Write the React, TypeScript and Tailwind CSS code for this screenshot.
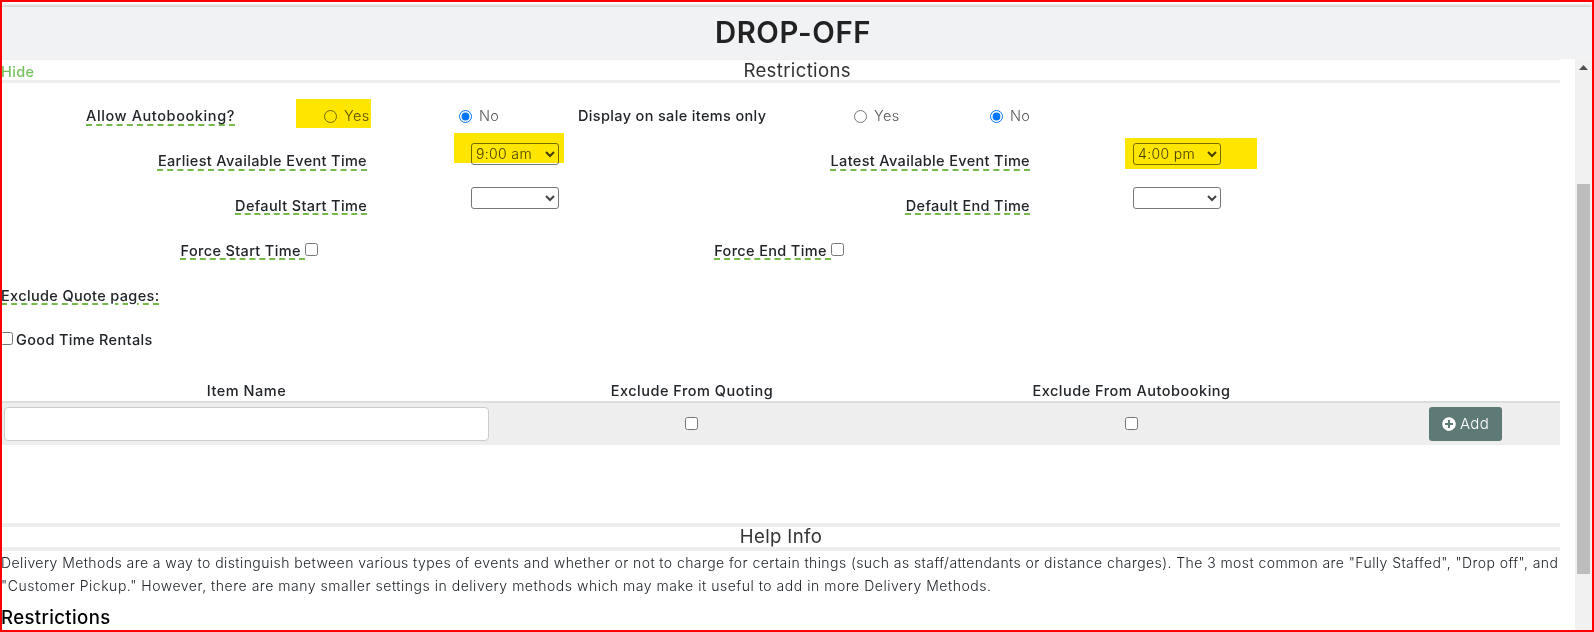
import { FaPlusCircle } from "react-icons/fa";

function Label({ text, className = "" }: { text: string; className?: string }) {
  return (
    <span className={`font-medium whitespace-pre underline decoration-dashed decoration-[#74b94a] decoration-2 underline-offset-[3px] ${className}`}>
      {text}
    </span>
  );
}

function Radio({ name, label, checked, className }: { name: string; label: string; checked?: boolean; className: string }) {
  return (
    <label className={`flex items-center text-[#555] font-light ${className}`}>
      <input type="radio" name={name} defaultChecked={checked} className="w-[13px] h-[13px] m-0 accent-[#0075ff]" />
      <span className="ml-[7px]">{label}</span>
    </label>
  );
}

function TimeSelect({ value, className = "" }: { value?: string; className?: string }) {
  return (
    <select defaultValue={value ?? ""} className={`w-[88px] h-[22px] bg-white border border-[#767676] rounded-[3px] text-[14px] text-[#444] font-light ${className}`}>
      <option value=""></option>
      <option value="9:00 am">9:00 am</option>
      <option value="4:00 pm">4:00 pm</option>
    </select>
  );
}

function SectionHead({ title, hide, lift }: { title: string; hide?: boolean; lift?: boolean }) {
  return (
    <div className={`h-[20px] relative ${lift ? "leading-[18px]" : "leading-[20px]"}`}>
      {hide && <span className="float-left mt-[2px] text-[14.5px] font-medium text-[#74c25a] -ml-[1px]">Hide</span>}
      <div className="text-center text-[18.6px] text-[#333]">{title}</div>
    </div>
  );
}

export default function App() {
  return (
    <div
      className="relative w-[1594px] h-[632px] border-2 border-[#ff0000] bg-white overflow-hidden flex flex-col text-[14.5px] text-[#212529] tracking-[0.35px]"
      style={{ fontFamily: "Inter, 'Noto Sans', sans-serif" }}
    >
      <div className="h-[57px] shrink-0 pt-[5px] bg-white">
        <div className="h-[52px] bg-[#f1f2f4] shadow-[0_-2px_3px_rgba(0,0,0,0.2)] flex items-center justify-center text-[29.3px] font-semibold text-[#222] pr-[8px] tracking-[0.6px]">
          DROP-OFF
        </div>
      </div>

      <div className="flex flex-1 min-h-0">
        <div className="w-[1558px] shrink-0 overflow-hidden">
          <div className="h-[1px] bg-[#eee]" />
          <SectionHead title="Restrictions" hide />
          <div className="h-[3px] bg-[#eee]" />

          <div className="h-[11px]" />
          <div className="h-[44px] flex items-center">
            <div className="w-[233px] text-right"><Label text="Allow Autobooking?" className="tracking-[0.6px]" /></div>
            <Radio name="auto" label="Yes" className="ml-[89px] w-[135px]" />
            <Radio name="auto" label="No" checked className="w-[119px]" />
            <span className="font-medium whitespace-nowrap w-[269px]">Display on sale items only</span>
            <Radio name="sale" label="Yes" className="ml-[7px] w-[136px]" />
            <Radio name="sale" label="No" checked className="" />
          </div>
          <div className="h-[46px] flex items-center">
            <div className="w-[365px] text-right"><Label text="Earliest Available Event Time" /></div>
            <TimeSelect value="9:00 am" className="ml-[104px] -mt-[15px]" />
            <div className="w-[471px] text-right"><Label text="Latest Available Event Time" /></div>
            <TimeSelect value="4:00 pm" className="ml-[103px] -mt-[15px]" />
          </div>
          <div className="h-[43px] flex items-center">
            <div className="w-[365px] text-right"><Label text="Default Start Time" /></div>
            <TimeSelect className="ml-[104px] -mt-[16px]" />
            <div className="w-[471px] text-right"><Label text="Default End Time" /></div>
            <TimeSelect className="ml-[103px] -mt-[16px]" />
          </div>
          <div className="h-[47px] flex items-center">
            <div className="w-[303px] text-right"><Label text={"Force Start Time\u00a0"} /></div>
            <input type="checkbox" className="w-[13px] h-[13px] m-0 -mt-[3px] accent-[#0075ff]" />
            <div className="w-[513px] text-right"><Label text={"Force End Time\u00a0"} /></div>
            <input type="checkbox" className="w-[13px] h-[13px] m-0 -mt-[3px] accent-[#0075ff]" />
          </div>
          <div className="h-[43px] flex items-center -ml-[1px]"><Label text="Exclude Quote pages:" /></div>
          <div className="h-[46px] flex items-center">
            <input type="checkbox" className="w-[13px] h-[13px] -ml-[2px] -mt-[4px] accent-[#0075ff]" />
            <span className="ml-[3px] font-medium">Good Time Rentals</span>
          </div>

          <div className="h-[18px]" />
          <div className="h-[20px] leading-[20px] grid grid-cols-[489px_402px_477px_190px] text-center font-medium tracking-[0.5px]">
            <div>Item Name</div>
            <div>Exclude From Quoting</div>
            <div>Exclude From Autobooking</div>
            <div />
          </div>
          <div className="border-t-2 border-[#ddd] h-[44px] bg-[#eee] grid grid-cols-[489px_402px_477px_190px] items-center">
            <input type="text" className="ml-[2px] w-[485px] h-[34px] -mt-[1px] bg-white border border-[#ccc] rounded-[4px]" />
            <div className="flex justify-center"><input type="checkbox" className="w-[13px] h-[13px] -mt-[1px] -ml-[2px] accent-[#0075ff]" /></div>
            <div className="flex justify-center"><input type="checkbox" className="w-[13px] h-[13px] -mt-[1px] accent-[#0075ff]" /></div>
            <div>
              <button className="ml-[59px] w-[73px] h-[34px] bg-[#5e7a76] rounded-[3px] text-white flex items-center justify-center gap-[4px] text-[15px] font-light">
                <FaPlusCircle size={14} />
                Add
              </button>
            </div>
          </div>

          <div className="h-[78px]" />
          <div className="h-[4px] bg-[#eee]" />
          <SectionHead title="Help Info" lift />
          <div className="h-[4px] bg-[#eee]" />
          <div className="-ml-[1px] leading-[23px] text-[14px] font-light whitespace-nowrap tracking-[0.425px]">
            <div>Delivery Methods are a way to distinguish between various types of events and whether or not to charge for certain things (such as staff/attendants or distance charges). The 3 most common are "Fully Staffed", "Drop off", and</div>
            <div className="tracking-[0.525px]">"Customer Pickup." However, there are many smaller settings in delivery methods which may make it useful to add in more Delivery Methods.</div>
          </div>
          <div className="-ml-[1px] h-[40px] leading-[40px] text-[18.6px] font-medium text-black">Restrictions</div>
        </div>

        <div className="w-[15px] shrink-0" />
        <div className="w-[17px] shrink-0 bg-[#f1f1f1] flex flex-col items-center">
          <svg width="9" height="5" viewBox="0 0 9 5" className="mt-[6px] shrink-0"><path d="M4.5 0 9 5H0z" fill="#505050" /></svg>
          <div className="w-[13px] h-[390px] bg-[#bdbdbd] mt-[114px] shrink-0" />
        </div>
      </div>

      {/* marker strokes pasted over the screenshot */}
      <div className="absolute left-[294px] top-[97px] w-[75px] h-[29px] bg-[#ffe600] mix-blend-multiply" />
      <div className="absolute left-[452px] top-[131px] w-[110px] h-[30px] bg-[#ffe600] mix-blend-multiply" />
      <div className="absolute left-[1123px] top-[136px] w-[132px] h-[31px] bg-[#ffe600] mix-blend-multiply" />
    </div>
  );
}
